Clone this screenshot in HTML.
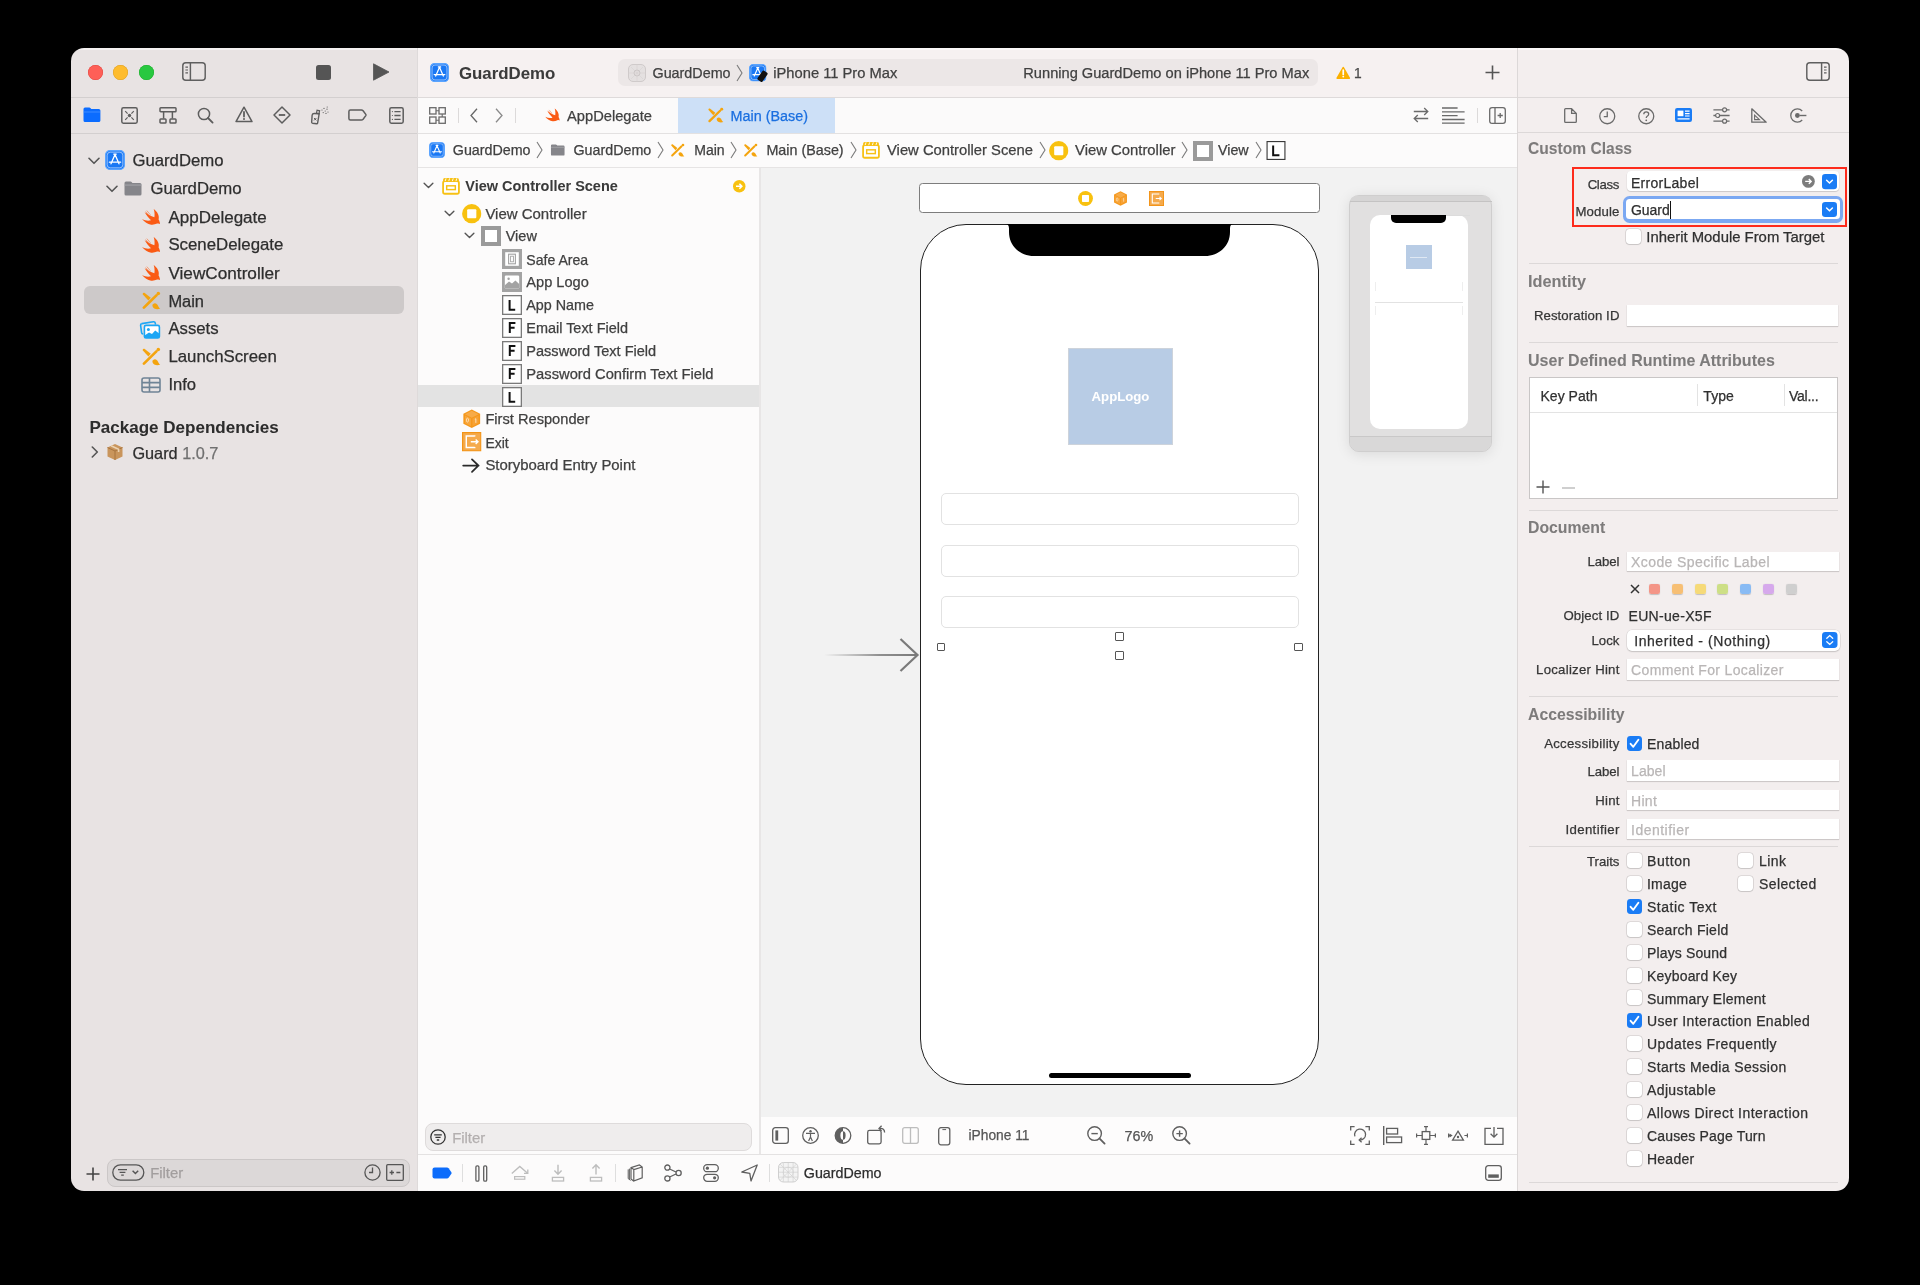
<!DOCTYPE html>
<html><head><meta charset="utf-8">
<style>
html,body{margin:0;padding:0;background:#000;width:1920px;height:1285px;overflow:hidden;}
body{font-family:"Liberation Sans",sans-serif;color:#2a2a2a;position:relative;}
#win{position:absolute;left:0;top:0;width:1920px;height:1285px;clip-path:inset(48px 71px 94px 71px round 13px);will-change:transform;}
.p{position:absolute;}
.t{position:absolute;white-space:nowrap;line-height:1;-webkit-text-stroke:0.25px currentColor;}
svg{position:absolute;overflow:visible;}
</style></head><body>

<svg width="0" height="0" style="position:absolute">
<defs>
<symbol id="appicon" viewBox="0 0 20 20"><rect x="0.6" y="0.6" width="18.8" height="18.8" rx="4.2" fill="#1a78f4" stroke="#5aa4ff" stroke-width="1.2"/><rect x="2.2" y="2.2" width="15.6" height="15.6" rx="3" fill="none" stroke="#d9e9ff" stroke-width="0.7" opacity="0.9"/><path d="M10 4.6 L6 13.8 M10 4.6 L14 13.8 M4.4 12.2 H15.6 M8.8 4.2 L11.2 4.2" stroke="#fff" stroke-width="1.3" fill="none" stroke-linecap="round"/></symbol>
<symbol id="folderg" viewBox="0 0 18 15"><path d="M0.5 2 Q0.5 0.5 2 0.5 H6.5 Q7.3 0.5 7.8 1.2 L8.4 2 H16 Q17.5 2 17.5 3.5 V13 Q17.5 14.5 16 14.5 H2 Q0.5 14.5 0.5 13 Z" fill="#85858a"/><rect x="0.5" y="3.6" width="17" height="0.9" fill="#a9a9ad"/></symbol>
<symbol id="swift" viewBox="-1 -2 20 20"><path d="M11.7 0 C15.2 2.5 17.6 6.5 16.6 10.6 C17.4 12 18 13.5 18 15 C17.2 14.4 16.2 14.2 15.2 14.6 C13.2 15.5 11.2 15.9 9.2 15.7 C5.6 15.3 2.4 13 0 10.1 C3.2 11.8 6.4 12.2 9 11.3 C6.8 9 4.2 6.2 2.6 3.1 C4.6 4.6 9 7.6 12.4 8.2 C12.8 5.5 12.6 2.5 11.7 0 Z" fill="#fa5a14"/><path d="M3.6 2.6 L7.2 6.6 M4.8 1.6 L8.4 5.8" stroke="#fa6a2a" stroke-width="0.7" opacity="0.8"/></symbol>
<symbol id="sb" viewBox="0 0 20 20"><path d="M2.9 16.6 L15.4 4.4" stroke="#f4a40e" stroke-width="2.7" stroke-linecap="round"/><circle cx="17.3" cy="2.6" r="1.75" fill="#f4a40e"/><path d="M1.6 3.2 Q1.8 1.4 3.4 1.8 L9.8 6.8 L7.4 9.6 Z" fill="#f4a40e"/><path d="M11.4 13.8 Q13 11.6 15 12.6 Q16.8 13.6 17.4 15.6 Q18 17 19.2 17.6 Q17.2 18.4 14.8 18 Q11.2 17.2 11.4 13.8 Z" fill="#f4a40e"/></symbol>
<symbol id="assets" viewBox="0 0 22 20"><path d="M2.8 3.6 L14.4 1.8 Q16 1.6 16.3 3.2 L16.5 4.6" stroke="#1ba6f5" stroke-width="1.6" fill="none"/><path d="M2.8 3.6 Q1.4 3.9 1.6 5.4 L2.6 12.6 Q2.8 14 4.2 13.9" stroke="#1ba6f5" stroke-width="1.6" fill="none"/><rect x="5.4" y="5.4" width="15" height="12.6" rx="1.6" fill="#fff" stroke="#1ba6f5" stroke-width="1.6"/><circle cx="9.4" cy="9.4" r="1.5" fill="#1ba6f5"/><path d="M5.6 15.6 L10 12.4 L13 14 L16.2 10.4 L20.2 13.6 V17 Q20.2 18 19.2 18 H6.6 Q5.6 18 5.6 17 Z" fill="#1ba6f5"/></symbol>
<symbol id="infoi" viewBox="0 0 20 16"><rect x="1" y="1" width="18" height="14" rx="2" fill="none" stroke="#6f8496" stroke-width="1.6"/><path d="M1 5.6 H19 M1 10.4 H19 M8.5 1 V15" stroke="#6f8496" stroke-width="1.6"/></symbol>
<symbol id="chevd" viewBox="0 0 12 8"><path d="M1 1.3 L6 6.3 L11 1.3" stroke="#555" stroke-width="1.6" fill="none" stroke-linecap="round" stroke-linejoin="round"/></symbol>
<symbol id="chevr" viewBox="0 0 8 12"><path d="M1.3 1 L6.3 6 L1.3 11" stroke="#555" stroke-width="1.6" fill="none" stroke-linecap="round" stroke-linejoin="round"/></symbol>
<symbol id="pkg" viewBox="0 0 18 18"><path d="M9 1 L16.5 4.5 V13.5 L9 17 L1.5 13.5 V4.5 Z" fill="#c9955c"/><path d="M1.5 4.5 L9 8 L16.5 4.5 M9 8 V17" stroke="#a8743f" stroke-width="1" fill="none"/><path d="M5 2.8 L12.6 6.3 V9" stroke="#ecd2b0" stroke-width="1.6" fill="none"/></symbol>
</defs></svg>
<svg width="0" height="0" style="position:absolute"><defs>
<symbol id="gt" viewBox="0 0 7 18"><path d="M1 1 L6 9 L1 17" stroke="#7a7a7a" stroke-width="1.1" fill="none"/></symbol>
<symbol id="scene" viewBox="0 0 20 20"><rect x="1.2" y="4.6" width="17.6" height="14" rx="2" fill="#fff" stroke="#f7c115" stroke-width="2"/><path d="M1.2 3 Q1.2 1.2 3 1.2 H17 Q18.8 1.2 18.8 3 V5 H1.2 Z" fill="#f7c115"/><path d="M4.5 1.5 L3.5 4.6 M8.5 1.5 L7.5 4.6 M12.5 1.5 L11.5 4.6 M16.5 1.5 L15.5 4.6" stroke="#fff" stroke-width="1"/><rect x="5.2" y="9.8" width="9.6" height="4.2" fill="none" stroke="#f7c115" stroke-width="1.6"/></symbol>
<symbol id="vc" viewBox="0 0 20 20"><circle cx="10" cy="10" r="9.9" fill="#f8c10f"/><rect x="5.3" y="5.3" width="9.4" height="9.4" rx="1" fill="#fff"/></symbol>
<symbol id="viewi" viewBox="0 0 20 20"><rect x="0" y="0" width="20" height="20" fill="#9a9a9a"/><rect x="4" y="4" width="12" height="12" fill="#fff"/></symbol>
<symbol id="lbl" viewBox="0 0 20 20"><rect x="0.6" y="0.6" width="18.8" height="18.8" fill="#fff" stroke="#3a3a3a" stroke-width="1.2"/><path d="M7 4.8 V15 H13.6" stroke="#111" stroke-width="2.1" fill="none"/></symbol>
<symbol id="fld" viewBox="0 0 20 20"><rect x="0.6" y="0.6" width="18.8" height="18.8" fill="#fff" stroke="#3a3a3a" stroke-width="1.2"/><path d="M7.4 15.2 V4.8 H13.6 M7.4 9.8 H12.8" stroke="#111" stroke-width="2.1" fill="none"/></symbol>
</defs></svg>
<svg width="0" height="0" style="position:absolute"><defs>
<symbol id="safe" viewBox="0 0 20 20"><rect x="0" y="0" width="20" height="20" fill="#a3a3a3"/><rect x="3.2" y="3.2" width="13.6" height="13.6" fill="#fff"/><rect x="6.6" y="5.2" width="6.8" height="9.6" fill="none" stroke="#a3a3a3" stroke-width="1.1"/><rect x="8.6" y="7.2" width="2.8" height="5.6" fill="none" stroke="#a3a3a3" stroke-width="0.9"/></symbol>
<symbol id="imgv" viewBox="0 0 20 20"><rect x="0" y="0" width="20" height="20" fill="#a3a3a3"/><rect x="2.8" y="3.6" width="14.4" height="12.8" rx="1.2" fill="#fff"/><path d="M2.8 13.2 L7 9.6 L10 11.6 L13.4 8.6 L17.2 12 V15.2 Q17.2 16.4 16 16.4 H4 Q2.8 16.4 2.8 15.2 Z" fill="#a3a3a3"/><circle cx="6.6" cy="6.8" r="1.2" fill="#a3a3a3"/></symbol>
<symbol id="lblo" viewBox="0 0 20 20"><rect x="0.65" y="0.65" width="18.7" height="18.7" fill="#fff" stroke="#7a7a7a" stroke-width="1.3"/><path d="M7.6 5 V14.8 H13.2" stroke="#111" stroke-width="2" fill="none"/></symbol>
<symbol id="fldo" viewBox="0 0 20 20"><rect x="0.65" y="0.65" width="18.7" height="18.7" fill="#fff" stroke="#7a7a7a" stroke-width="1.3"/><path d="M7.8 15 V5 H13.4 M7.8 9.8 H12.6" stroke="#111" stroke-width="2" fill="none"/></symbol>
<symbol id="cube" viewBox="0 0 20 20"><path d="M10 0.4 L18.6 4.8 V15.2 L10 19.6 L1.4 15.2 V4.8 Z" fill="#f5981c"/><path d="M10 1.8 L17 5.4 L10 9 L3 5.4 Z" fill="#f7ab48"/><path d="M3 6.6 L9.3 9.8 V17.8 L3 14.4 Z" fill="#f7a63c"/><path d="M10.7 9.8 L17 6.6 V14.4 L10.7 17.8 Z" fill="#f7a235"/><ellipse cx="5.6" cy="11.4" rx="1.1" ry="2" fill="none" stroke="#fde2bd" stroke-width="0.9"/><path d="M13.2 10.6 L14.2 10 V14.2" stroke="#fde2bd" stroke-width="1" fill="none"/></symbol>
<symbol id="exiti" viewBox="0 0 20 20"><rect x="0" y="0" width="20" height="20" fill="#f39416"/><rect x="1.2" y="1.2" width="17.6" height="17.6" fill="#f5aa4c"/><path d="M13 4.6 V4 H4.4 V16 H13 V15.4" stroke="#fff" stroke-width="1.5" fill="none"/><path d="M9 10 H16.2 M14 7.8 L16.4 10 L14 12.2" stroke="#fff" stroke-width="1.4" fill="none"/></symbol>
</defs></svg>

<div id="win">
<div class="p" style="left:71px;top:48px;width:346px;height:1143px;background:#e8e3e3"></div>
<div class="p" style="left:71px;top:48px;width:346px;height:2px;background:#f4f1f1"></div>
<div class="p" style="left:71px;top:97px;width:346px;height:1px;background:#d3cfcf"></div>
<div class="p" style="left:71px;top:133px;width:346px;height:1px;background:#d3cfcf"></div>
<div class="p" style="left:417px;top:48px;width:1px;height:1143px;background:#dedada"></div>
<div class="p" style="left:418px;top:48px;width:1099px;height:49px;background:#f6f1f1"></div>
<div class="p" style="left:418px;top:48px;width:1099px;height:2px;background:#fbf9f9"></div>
<div class="p" style="left:418px;top:97px;width:1099px;height:1px;background:#dedada"></div>
<div class="p" style="left:418px;top:98px;width:1099px;height:35px;background:#fbfafa"></div>
<div class="p" style="left:418px;top:133px;width:1099px;height:1px;background:#e3e1e1"></div>
<div class="p" style="left:418px;top:134px;width:1099px;height:33px;background:#fcfbfb"></div>
<div class="p" style="left:418px;top:167px;width:1099px;height:1px;background:#e6e4e4"></div>
<div class="p" style="left:418px;top:168px;width:341px;height:987px;background:#fcfbfb"></div>
<div class="p" style="left:759px;top:168px;width:2px;height:987px;background:#e8e6e6"></div>
<div class="p" style="left:761px;top:168px;width:756px;height:949px;background:#f2f2f2"></div>
<div class="p" style="left:761px;top:1117px;width:756px;height:37px;background:#fdfcfc"></div>
<div class="p" style="left:418px;top:1154px;width:1099px;height:1px;background:#e4e2e2"></div>
<div class="p" style="left:418px;top:1155px;width:1099px;height:36px;background:#fcfbfb"></div>
<div class="p" style="left:1517px;top:48px;width:1px;height:1143px;background:#dcd8d8"></div>
<div class="p" style="left:1518px;top:48px;width:331px;height:1143px;background:#f3eeee"></div>
<div class="p" style="left:1518px;top:48px;width:331px;height:2px;background:#fbf8f8"></div>
<div class="p" style="left:1518px;top:97px;width:331px;height:1px;background:#dcd8d8"></div>
<div class="p" style="left:1518px;top:132px;width:331px;height:1px;background:#dcd8d8"></div>
<div class="p" style="left:88px;top:65px;width:15px;height:15px;border-radius:50%;background:#fe5f57;box-shadow:inset 0 0 0 0.5px #e14640"></div>
<div class="p" style="left:113px;top:65px;width:15px;height:15px;border-radius:50%;background:#febc2e;box-shadow:inset 0 0 0 0.5px #dfa023"></div>
<div class="p" style="left:139px;top:65px;width:15px;height:15px;border-radius:50%;background:#28c840;box-shadow:inset 0 0 0 0.5px #1dad2b"></div>
<svg style="left:182px;top:62px;" width="25" height="20" viewBox="0 0 25 20"><rect x="0.8" y="0.8" width="22.4" height="17.4" rx="3" fill="none" stroke="#5f5f5f" stroke-width="1.45"/><path d="M8.4 1 V18" stroke="#5f5f5f" stroke-width="1.45"/><path d="M3.4 5.2 H6 M3.4 8 H6 M3.4 10.8 H6" stroke="#5f5f5f" stroke-width="1.2"/></svg>
<div class="p" style="left:316px;top:65px;width:15px;height:15px;background:#555;border-radius:2.5px"></div>
<svg style="left:372px;top:63px;" width="18" height="18" viewBox="0 0 18 18"><path d="M1.5 0.8 L17 9 L1.5 17.2 Z" fill="#555" stroke="#555" stroke-width="0.8" stroke-linejoin="round"/></svg>
<svg style="left:83px;top:107px;" width="18" height="16" viewBox="0 0 18 16"><path d="M0.5 2 Q0.5 0.5 2 0.5 H6.3 Q7 0.5 7.6 1.2 L8.3 2 H15.8 Q17.4 2 17.4 3.6 V13.4 Q17.4 15 15.8 15 H2 Q0.5 15 0.5 13.4 Z" fill="#0b6cff"/><path d="M0.8 5 H17" stroke="#4d95ff" stroke-width="0.8"/></svg>
<svg style="left:121px;top:107px;" width="17" height="17" viewBox="0 0 17 17"><rect x="0.8" y="0.8" width="15.4" height="15.4" rx="1.6" fill="none" stroke="#5d5d5d" stroke-width="1.5"/><circle cx="8.5" cy="8.5" r="1.7" fill="#5d5d5d"/><path d="M4.2 4.2 L6.6 6.6 M12.8 4.2 L10.4 6.6 M4.2 12.8 L6.6 10.4 M12.8 12.8 L10.4 10.4" stroke="#5d5d5d" stroke-width="1.2"/></svg>
<svg style="left:159px;top:107px;" width="18" height="17" viewBox="0 0 18 17"><rect x="1" y="0.8" width="16" height="4" rx="0.8" fill="none" stroke="#5d5d5d" stroke-width="1.5"/><path d="M4.6 4.8 V11.6 M13.4 4.8 V11.6" stroke="#5d5d5d" stroke-width="1.5"/><rect x="1" y="12" width="6" height="4" rx="0.8" fill="none" stroke="#5d5d5d" stroke-width="1.5"/><rect x="11" y="12" width="6" height="4" rx="0.8" fill="none" stroke="#5d5d5d" stroke-width="1.5"/></svg>
<svg style="left:197px;top:107px;" width="17" height="17" viewBox="0 0 17 17"><circle cx="7" cy="7" r="5.6" fill="none" stroke="#5d5d5d" stroke-width="1.5"/><path d="M11 11 L15.6 15.6" stroke="#5d5d5d" stroke-width="1.8" stroke-linecap="round"/></svg>
<svg style="left:235px;top:106px;" width="18" height="17" viewBox="0 0 18 17"><path d="M9 1.2 L17 15.6 H1 Z" fill="none" stroke="#5d5d5d" stroke-width="1.5" stroke-linejoin="round"/><path d="M9 6 V10.6" stroke="#5d5d5d" stroke-width="1.8" stroke-linecap="round"/><circle cx="9" cy="13" r="1" fill="#5d5d5d"/></svg>
<svg style="left:273px;top:106px;" width="18" height="18" viewBox="0 0 18 18"><path d="M9 1 L17 9 L9 17 L1 9 Z" fill="none" stroke="#5d5d5d" stroke-width="1.5" stroke-linejoin="round"/><path d="M5.8 9 H12.2" stroke="#5d5d5d" stroke-width="1.8"/></svg>
<svg style="left:310px;top:106px;" width="20" height="18" viewBox="0 0 20 18"><path d="M3.4 7.8 L8.2 7 L8.6 16.4 Q8.6 17.2 7.8 17.3 L3.6 17.6 Q2.8 17.6 2.6 16.8 L1.6 9.8 Q1.6 8.1 3.4 7.8 Z" fill="none" stroke="#5d5d5d" stroke-width="1.4" transform="rotate(12 5 12)"/><rect x="5.4" y="4" width="2.6" height="3" fill="none" stroke="#5d5d5d" stroke-width="1.2" transform="rotate(12 5 12)"/><path d="M4 12 L6.4 14.4 M6.4 12 L4 14.4" stroke="#5d5d5d" stroke-width="1"/><g fill="#5d5d5d"><circle cx="12" cy="4" r="0.6"/><circle cx="14" cy="2.4" r="0.6"/><circle cx="15.2" cy="5" r="0.6"/><circle cx="17" cy="3.2" r="0.6"/><circle cx="13.2" cy="6.6" r="0.6"/><circle cx="16" cy="7.4" r="0.6"/><circle cx="18" cy="6" r="0.6"/><circle cx="17.2" cy="1" r="0.6"/></g></svg>
<svg style="left:348px;top:108.5px;" width="19" height="13" viewBox="0 0 19 13"><path d="M2.4 0.9 H13.4 Q14.4 0.9 15.1 1.7 L17.8 5.4 Q18.2 6 17.8 6.6 L15.1 10.3 Q14.4 11.1 13.4 11.1 H2.4 Q0.9 11.1 0.9 9.6 V2.4 Q0.9 0.9 2.4 0.9 Z" fill="none" stroke="#5d5d5d" stroke-width="1.5"/></svg>
<svg style="left:389px;top:106.8px;" width="15" height="17" viewBox="0 0 15 17"><rect x="0.8" y="0.8" width="13.4" height="15.4" rx="1.6" fill="none" stroke="#5d5d5d" stroke-width="1.5"/><path d="M5.4 4.6 H11.6 M5.4 8.5 H11.6 M5.4 12.4 H11.6" stroke="#5d5d5d" stroke-width="1.4"/><circle cx="3.4" cy="4.6" r="0.6" fill="#5d5d5d"/><circle cx="3.4" cy="8.5" r="0.6" fill="#5d5d5d"/><circle cx="3.4" cy="12.4" r="0.6" fill="#5d5d5d"/></svg>
<svg style="left:88px;top:157px;" width="12" height="8"><use href="#chevd"/></svg>
<svg style="left:105px;top:150px;" width="20" height="20"><use href="#appicon"/></svg>
<div class="t" style="left:132.40px;top:152.88px;font-size:16.74px;color:#2e2e2e;">GuardDemo</div>
<svg style="left:106px;top:185px;" width="12" height="8"><use href="#chevd"/></svg>
<svg style="left:124px;top:181px;" width="18" height="15"><use href="#folderg"/></svg>
<div class="t" style="left:150.40px;top:180.88px;font-size:16.74px;color:#2e2e2e;">GuardDemo</div>
<div class="p" style="left:84px;top:286px;width:320px;height:28px;background:#cdc9c9;border-radius:6px"></div>
<svg style="left:141px;top:206.5px;" width="20" height="20"><use href="#swift"/></svg>
<div class="t" style="left:168.40px;top:208.76px;font-size:17.02px;color:#2e2e2e;">AppDelegate</div>
<svg style="left:141px;top:234.5px;" width="20" height="20"><use href="#swift"/></svg>
<div class="t" style="left:168.40px;top:236.85px;font-size:16.82px;color:#2e2e2e;">SceneDelegate</div>
<svg style="left:141px;top:262.5px;" width="20" height="20"><use href="#swift"/></svg>
<div class="t" style="left:168.40px;top:264.67px;font-size:17.21px;color:#2e2e2e;">ViewController</div>
<svg style="left:141px;top:290.5px;" width="20" height="20"><use href="#sb"/></svg>
<div class="t" style="left:168.40px;top:293.03px;font-size:16.42px;color:#2e2e2e;">Main</div>
<svg style="left:139px;top:319.5px;" width="22" height="20"><use href="#assets"/></svg>
<div class="t" style="left:168.40px;top:320.89px;font-size:16.73px;color:#2e2e2e;">Assets</div>
<svg style="left:141px;top:346.5px;" width="20" height="20"><use href="#sb"/></svg>
<div class="t" style="left:168.40px;top:348.85px;font-size:16.81px;color:#2e2e2e;">LaunchScreen</div>
<svg style="left:141px;top:376.5px;" width="20" height="16"><use href="#infoi"/></svg>
<div class="t" style="left:168.40px;top:376.94px;font-size:16.61px;color:#2e2e2e;">Info</div>
<div class="t" style="left:89.50px;top:419.26px;font-size:17.02px;color:#2c2c2c;font-weight:bold;-webkit-text-stroke:0.05px currentColor;">Package Dependencies</div>
<svg style="left:91px;top:446px;" width="8" height="12"><use href="#chevr"/></svg>
<svg style="left:106px;top:443px;" width="18" height="18"><use href="#pkg"/></svg>
<div class="t" style="left:132.40px;top:445.09px;font-size:16.28px;color:#2e2e2e;">Guard <span style="color:#707070">1.0.7</span></div>
<svg style="left:85px;top:1165.5px;" width="16" height="16" viewBox="0 0 16 16"><path d="M8 1.5 V14.5 M1.5 8 H14.5" stroke="#444" stroke-width="1.6"/></svg>
<div class="p" style="left:107px;top:1159px;width:303px;height:28px;background:#dcd8d8;border:1px solid #cbc7c7;border-radius:8px;box-sizing:border-box"></div>
<svg style="left:112px;top:1164px;" width="34" height="17" viewBox="0 0 34 17"><rect x="0.8" y="0.8" width="31" height="15.4" rx="7.7" fill="none" stroke="#555" stroke-width="1.3"/><path d="M6 5.6 H15 M7.6 8.4 H13.4 M9.2 11.2 H11.8" stroke="#555" stroke-width="1.2"/><path d="M20.6 6.8 L23.4 9.6 L26.2 6.8" stroke="#555" stroke-width="1.4" fill="none"/></svg>
<div class="t" style="left:150.20px;top:1165.74px;font-size:14.85px;color:#a29e9e;">Filter</div>
<svg style="left:364px;top:1164px;" width="17" height="17" viewBox="0 0 17 17"><circle cx="8.5" cy="8.5" r="7.6" fill="none" stroke="#555" stroke-width="1.3"/><path d="M8.5 3.6 V8.5 H5" stroke="#555" stroke-width="1.3" fill="none"/></svg>
<svg style="left:386px;top:1164px;" width="18" height="17" viewBox="0 0 18 17"><rect x="0.7" y="0.7" width="16.6" height="15.6" rx="1" fill="none" stroke="#555" stroke-width="1.3"/><path d="M3.6 8.5 H8 M5.8 6.3 V10.7 M10.4 8.5 H14.4" stroke="#555" stroke-width="1.3"/></svg>
<svg style="left:430px;top:63px;" width="19" height="19"><use href="#appicon"/></svg>
<div class="t" style="left:459.00px;top:65.94px;font-size:16.84px;color:#3b3b3b;font-weight:bold;-webkit-text-stroke:0.05px currentColor;">GuardDemo</div>
<div class="p" style="left:618px;top:59px;width:700px;height:27px;background:#ece7e7;border-radius:7px"></div>
<svg style="left:628px;top:63.5px;" width="18" height="18" viewBox="0 0 18 18"><rect x="0.5" y="0.5" width="17" height="17" rx="4.5" fill="#e4e0e0" stroke="#cfcaca" stroke-width="1"/><circle cx="9" cy="9" r="3" fill="none" stroke="#cbc6c6" stroke-width="1"/><path d="M9 0.5 V17.5 M0.5 9 H17.5 M3 3 L15 15 M15 3 L3 15" stroke="#d6d1d1" stroke-width="0.6"/></svg>
<div class="t" style="left:652.50px;top:65.68px;font-size:14.34px;color:#414141;">GuardDemo</div>
<svg style="left:736px;top:63.5px;" width="7" height="18"><use href="#gt"/></svg>
<svg style="left:749px;top:63.5px;" width="17.5" height="17.5"><use href="#appicon"/></svg>
<svg style="left:758px;top:70px;" width="10" height="13" viewBox="0 0 10 13"><rect x="1.5" y="0.8" width="6" height="11" rx="1.2" fill="#111" transform="rotate(35 4.5 6.3)"/></svg>
<div class="t" style="left:773.30px;top:65.51px;font-size:14.71px;color:#414141;">iPhone 11 Pro Max</div>
<div class="t" style="left:1023.30px;top:65.54px;font-size:14.63px;color:#414141;">Running GuardDemo on iPhone 11 Pro Max</div>
<svg style="left:1335.5px;top:65.5px;" width="14.5" height="13.5" viewBox="0 0 14.5 13.5"><path d="M7.25 0.8 Q7.8 0.8 8.1 1.4 L14 11.8 Q14.4 12.8 13.3 12.9 H1.2 Q0.1 12.8 0.5 11.8 L6.4 1.4 Q6.7 0.8 7.25 0.8 Z" fill="#fbb000"/><path d="M7.25 4 V8.4" stroke="#fff" stroke-width="1.7" stroke-linecap="round"/><circle cx="7.25" cy="10.6" r="0.95" fill="#fff"/></svg>
<div class="t" style="left:1354.00px;top:66.62px;font-size:13.8px;color:#4a4a4a;">1</div>
<svg style="left:1484.5px;top:65px;" width="15" height="15" viewBox="0 0 15 15"><path d="M7.5 0.5 V14.5 M0.5 7.5 H14.5" stroke="#555" stroke-width="1.6"/></svg>
<svg style="left:429px;top:107px;" width="17" height="17" viewBox="0 0 17 17"><rect x="0.7" y="0.7" width="6.3" height="6.3" fill="none" stroke="#6a6a6a" stroke-width="1.3"/><rect x="10" y="0.7" width="6.3" height="6.3" fill="none" stroke="#6a6a6a" stroke-width="1.3"/><rect x="0.7" y="10" width="6.3" height="6.3" fill="none" stroke="#6a6a6a" stroke-width="1.3"/><rect x="10" y="10" width="6.3" height="6.3" fill="none" stroke="#6a6a6a" stroke-width="1.3"/><path d="M7 3.8 H10 M7 13.2 H10 M13.2 7 V10" stroke="#6a6a6a" stroke-width="1.1"/></svg>
<div class="p" style="left:458px;top:108px;width:1px;height:15px;background:#dcdada"></div>
<svg style="left:470px;top:108px;" width="8" height="15" viewBox="0 0 8 15"><path d="M7 0.8 L1 7.5 L7 14.2" stroke="#666" stroke-width="1.3" fill="none"/></svg>
<svg style="left:495px;top:108px;" width="8" height="15" viewBox="0 0 8 15"><path d="M1 0.8 L7 7.5 L1 14.2" stroke="#8a8a8a" stroke-width="1.3" fill="none"/></svg>
<div class="p" style="left:515px;top:108px;width:1px;height:15px;background:#dcdada"></div>
<svg style="left:544px;top:107px;" width="17" height="16"><use href="#swift"/></svg>
<div class="t" style="left:567.00px;top:108.61px;font-size:14.7px;color:#414141;">AppDelegate</div>
<div class="p" style="left:678px;top:98px;width:157px;height:35px;background:#cde0f7"></div>
<svg style="left:707px;top:107px;" width="17" height="17"><use href="#sb"/></svg>
<div class="t" style="left:730.50px;top:108.76px;font-size:14.38px;color:#1a6fe0;">Main (Base)</div>
<svg style="left:1413px;top:107px;" width="16" height="16" viewBox="0 0 16 16"><path d="M0.8 4.5 H14.6 M11.2 1 L14.8 4.5 L11.2 8 M15.2 11.5 H1.4 M4.8 8 L1.2 11.5 L4.8 15" stroke="#6a6a6a" stroke-width="1.3" fill="none"/></svg>
<svg style="left:1442px;top:107px;" width="23" height="17" viewBox="0 0 23 17"><path d="M0 1 H15.6 M0 4.9 H22.6 M0 8.7 H15.6 M0 12.5 H22.6 M0 16.2 H22.6" stroke="#6a6a6a" stroke-width="1.3"/></svg>
<div class="p" style="left:1477px;top:108px;width:1px;height:15px;background:#dcdada"></div>
<svg style="left:1489px;top:107px;" width="17" height="17" viewBox="0 0 17 17"><rect x="0.7" y="0.7" width="15.6" height="15.6" rx="2.4" fill="none" stroke="#6a6a6a" stroke-width="1.3"/><path d="M6 0.7 V16.3 M8.6 8.5 H13.8 M11.2 5.9 V11.1" stroke="#6a6a6a" stroke-width="1.3"/></svg>
<svg style="left:429px;top:142px;" width="16" height="16"><use href="#appicon"/></svg>
<div class="t" style="left:452.80px;top:143.30px;font-size:14.28px;color:#414141;">GuardDemo</div>
<svg style="left:536px;top:141px;" width="7" height="18"><use href="#gt"/></svg>
<svg style="left:549.5px;top:144px;" width="15.5" height="12"><use href="#folderg"/></svg>
<div class="t" style="left:573.50px;top:143.30px;font-size:14.28px;color:#414141;">GuardDemo</div>
<svg style="left:657px;top:141px;" width="7" height="18"><use href="#gt"/></svg>
<svg style="left:670px;top:143px;" width="15" height="15"><use href="#sb"/></svg>
<div class="t" style="left:694.20px;top:143.40px;font-size:14.07px;color:#414141;">Main</div>
<svg style="left:729.5px;top:141px;" width="7" height="18"><use href="#gt"/></svg>
<svg style="left:743px;top:143px;" width="15" height="15"><use href="#sb"/></svg>
<div class="t" style="left:766.40px;top:143.28px;font-size:14.34px;color:#414141;">Main (Base)</div>
<svg style="left:850px;top:141px;" width="7" height="18"><use href="#gt"/></svg>
<svg style="left:862px;top:141px;" width="18" height="18"><use href="#scene"/></svg>
<div class="t" style="left:887.00px;top:143.07px;font-size:14.79px;color:#414141;">View Controller Scene</div>
<svg style="left:1038.5px;top:141px;" width="7" height="18"><use href="#gt"/></svg>
<svg style="left:1049px;top:140.5px;" width="19.5" height="19.5"><use href="#vc"/></svg>
<div class="t" style="left:1075.00px;top:143.04px;font-size:14.85px;color:#414141;">View Controller</div>
<svg style="left:1181px;top:141px;" width="7" height="18"><use href="#gt"/></svg>
<svg style="left:1192.5px;top:140.5px;" width="20" height="20"><use href="#viewi"/></svg>
<div class="t" style="left:1218.00px;top:143.30px;font-size:14.28px;color:#414141;">View</div>
<svg style="left:1255px;top:141px;" width="7" height="18"><use href="#gt"/></svg>
<svg style="left:1266px;top:141px;" width="20" height="19"><use href="#lbl"/></svg>
<svg style="left:1806px;top:62px;" width="25" height="20" viewBox="0 0 25 20"><rect x="0.8" y="0.8" width="22.4" height="17.4" rx="3" fill="none" stroke="#5f5f5f" stroke-width="1.45"/><path d="M15.6 1 V18" stroke="#5f5f5f" stroke-width="1.45"/><path d="M18 5.2 H20.6 M18 8 H20.6 M18 10.8 H20.6" stroke="#5f5f5f" stroke-width="1.2"/></svg>
<div class="p" style="left:418px;top:385px;width:341px;height:22px;background:#e3e3e3"></div>
<svg style="left:423px;top:182px;" width="11" height="7"><use href="#chevd"/></svg>
<svg style="left:442px;top:177px;" width="18" height="18"><use href="#scene"/></svg>
<div class="t" style="left:465.30px;top:179.12px;font-size:14.47px;color:#3a3a3a;font-weight:bold;-webkit-text-stroke:0.05px currentColor;">View Controller Scene</div>
<svg style="left:733px;top:179.5px;" width="12.5" height="12.5" viewBox="0 0 12.5 12.5"><circle cx="6.25" cy="6.25" r="6.25" fill="#f8c10f"/><path d="M3 6.25 H8.6 M6.4 3.8 L8.8 6.25 L6.4 8.7" stroke="#fff" stroke-width="1.6" fill="none"/></svg>
<svg style="left:443.5px;top:209.5px;" width="11" height="7"><use href="#chevd"/></svg>
<svg style="left:461.5px;top:203.5px;" width="19.5" height="19.5"><use href="#vc"/></svg>
<div class="t" style="left:485.40px;top:206.69px;font-size:14.97px;color:#404040;">View Controller</div>
<svg style="left:464px;top:232px;" width="11" height="7"><use href="#chevd"/></svg>
<svg style="left:481.2px;top:226px;" width="20" height="20"><use href="#viewi"/></svg>
<div class="t" style="left:505.70px;top:229.39px;font-size:14.52px;color:#404040;">View</div>
<svg style="left:502px;top:249.10000000000002px;" width="20" height="20"><use href="#safe"/></svg>
<div class="t" style="left:526.30px;top:252.68px;font-size:14.1px;color:#404040;">Safe Area</div>
<svg style="left:502px;top:272.05px;" width="20" height="20"><use href="#imgv"/></svg>
<div class="t" style="left:526.30px;top:275.41px;font-size:14.6px;color:#404040;">App Logo</div>
<svg style="left:502px;top:295.0px;" width="20" height="20"><use href="#lblo"/></svg>
<div class="t" style="left:526.30px;top:298.48px;font-size:14.33px;color:#404040;">App Name</div>
<svg style="left:502px;top:317.95000000000005px;" width="20" height="20"><use href="#fldo"/></svg>
<div class="t" style="left:526.30px;top:321.38px;font-size:14.45px;color:#404040;">Email Text Field</div>
<svg style="left:502px;top:340.90000000000003px;" width="20" height="20"><use href="#fldo"/></svg>
<div class="t" style="left:526.30px;top:344.28px;font-size:14.55px;color:#404040;">Password Text Field</div>
<svg style="left:502px;top:363.85px;" width="20" height="20"><use href="#fldo"/></svg>
<div class="t" style="left:526.30px;top:367.15px;font-size:14.73px;color:#404040;">Password Confirm Text Field</div>
<svg style="left:502px;top:386.8px;" width="20" height="20"><use href="#lblo"/></svg>
<svg style="left:461.5px;top:409px;" width="19.5" height="19.5"><use href="#cube"/></svg>
<div class="t" style="left:485.40px;top:412.33px;font-size:14.65px;color:#404040;">First Responder</div>
<svg style="left:461.5px;top:432px;" width="19.5" height="19.5"><use href="#exiti"/></svg>
<div class="t" style="left:485.40px;top:435.64px;font-size:13.98px;color:#404040;">Exit</div>
<svg style="left:462px;top:456px;" width="19" height="19" viewBox="0 0 19 19"><path d="M1.2 9.6 H16.6 M10 3.4 L16.4 9.6 L10 15.8" stroke="#2a2a2a" stroke-width="1.8" fill="none" stroke-linecap="round"/></svg>
<div class="t" style="left:485.40px;top:458.22px;font-size:14.91px;color:#404040;">Storyboard Entry Point</div>
<div class="p" style="left:425px;top:1123px;width:327px;height:28px;background:#efeded;border:1px solid #dedbdb;border-radius:8px;box-sizing:border-box"></div>
<svg style="left:430px;top:1129px;" width="16" height="16" viewBox="0 0 16 16"><circle cx="8" cy="8" r="7.2" fill="none" stroke="#333" stroke-width="1.3"/><path d="M4.2 5.8 H11.8 M5.4 8.4 H10.6 M6.8 11 H9.2" stroke="#333" stroke-width="1.3"/></svg>
<div class="t" style="left:452.20px;top:1130.74px;font-size:14.85px;color:#b3afaf;">Filter</div>
<div class="p" style="left:919px;top:182.5px;width:401px;height:30.5px;background:#fff;border:1.3px solid #7d7d7d;border-radius:3.5px;box-sizing:border-box"></div>
<svg style="left:1077.5px;top:190.5px;" width="15" height="15"><use href="#vc"/></svg>
<svg style="left:1113px;top:190.5px;" width="15" height="15"><use href="#cube"/></svg>
<svg style="left:1148.5px;top:190.5px;" width="15" height="15"><use href="#exiti"/></svg>
<div class="p" style="left:920px;top:224px;width:399px;height:861px;background:#fff;border:1.6px solid #222;border-radius:46px;box-sizing:border-box"></div>
<svg style="left:1005px;top:224px;" width="229" height="32" viewBox="0 0 229 32"><path d="M0 0 H229 C226.2 0 225 1.4 225 4.6 V8 C225 22 214 32 200 32 H29 C15 32 4 22 4 8 V4.6 C4 1.4 2.8 0 0 0 Z" fill="#000"/></svg>
<div class="p" style="left:1049px;top:1072.5px;width:141.5px;height:5.0px;background:#000;border-radius:3px"></div>
<div class="p" style="left:1068px;top:348px;width:105px;height:96.5px;background:#b8cce5;border:1px solid #cdd3db;box-sizing:border-box"></div>
<div class="t" style="left:820.50px;width:600px;text-align:center;top:389.99px;font-size:13.2px;color:#fff;font-weight:bold;-webkit-text-stroke:0.05px currentColor;">AppLogo</div>
<div class="p" style="left:940.5px;top:492.5px;width:358.5px;height:32.299999999999955px;background:#fff;border:1px solid #e2e2e2;border-radius:5px;box-sizing:border-box"></div>
<div class="p" style="left:940.5px;top:544.5px;width:358.5px;height:32.299999999999955px;background:#fff;border:1px solid #e2e2e2;border-radius:5px;box-sizing:border-box"></div>
<div class="p" style="left:940.5px;top:596px;width:358.5px;height:32.299999999999955px;background:#fff;border:1px solid #e2e2e2;border-radius:5px;box-sizing:border-box"></div>
<div class="p" style="left:936.7px;top:642.7px;width:8.599999999999909px;height:8.599999999999909px;background:#fff;border:1.5px solid #555;box-sizing:border-box;border-radius:1px"></div>
<div class="p" style="left:1115.0px;top:632.3000000000001px;width:8.599999999999909px;height:8.599999999999909px;background:#fff;border:1.5px solid #555;box-sizing:border-box;border-radius:1px"></div>
<div class="p" style="left:1115.0px;top:651.3000000000001px;width:8.599999999999909px;height:8.599999999999909px;background:#fff;border:1.5px solid #555;box-sizing:border-box;border-radius:1px"></div>
<div class="p" style="left:1294.2px;top:642.7px;width:8.599999999999909px;height:8.599999999999909px;background:#fff;border:1.5px solid #555;box-sizing:border-box;border-radius:1px"></div>
<svg style="left:824px;top:638px;" width="96" height="34" viewBox="0 0 96 34"><defs><linearGradient id="ag" gradientUnits="userSpaceOnUse" x1="0" y1="0" x2="92" y2="0"><stop offset="0" stop-color="#8a8a8a" stop-opacity="0"/><stop offset="0.6" stop-color="#858585" stop-opacity="0.9"/><stop offset="1" stop-color="#7a7a7a"/></linearGradient></defs><path d="M0 17 H92" stroke="url(#ag)" stroke-width="2.2"/><path d="M76.5 1 L93.5 17 L76.5 33" stroke="#7a7a7a" stroke-width="2.2" fill="none"/></svg>
<div class="p" style="left:1349px;top:195px;width:143px;height:257px;background:#e1e0e0;border:1px solid #cfcece;border-radius:10px;box-sizing:border-box;box-shadow:0 2px 14px rgba(0,0,0,0.10)"></div>
<div class="p" style="left:1350px;top:196px;width:141px;height:5.5px;background:#d6d5d5;border-radius:9px 9px 0 0"></div>
<div class="p" style="left:1349.5px;top:201px;width:142.0px;height:1px;background:#c4c3c3"></div>
<div class="p" style="left:1349.5px;top:436px;width:142.0px;height:1px;background:#c9c8c8"></div>
<div class="p" style="left:1350px;top:437px;width:141px;height:14px;background:#d9d8d8;border-radius:0 0 9px 9px"></div>
<div class="p" style="left:1369.5px;top:215px;width:98.5px;height:213.5px;background:#fff;border-radius:10px"></div>
<div class="p" style="left:1390.5px;top:215px;width:55.5px;height:8px;background:#000;border-radius:0 0 5px 5px"></div>
<div class="p" style="left:1405.5px;top:245px;width:26.0px;height:24px;background:#b8cce5"></div>
<div class="p" style="left:1410px;top:256.5px;width:17px;height:1.0px;background:#dfe8f3"></div>
<div class="p" style="left:1375px;top:281.5px;width:1px;height:9.0px;background:#eeeeee"></div>
<div class="p" style="left:1462px;top:281.5px;width:1px;height:9.0px;background:#eeeeee"></div>
<div class="p" style="left:1375px;top:301.5px;width:88px;height:1.0px;background:#e2e2e2"></div>
<div class="p" style="left:1375px;top:305.5px;width:1px;height:9.0px;background:#eeeeee"></div>
<div class="p" style="left:1462px;top:305.5px;width:1px;height:9.0px;background:#eeeeee"></div>
<div class="p" style="left:1446px;top:214.5px;width:24px;height:1.0px;background:#dcdcdc"></div>
<svg style="left:1564px;top:108px;" width="13" height="15" viewBox="0 0 13 15"><path d="M0.7 1.6 Q0.7 0.7 1.6 0.7 H7.6 L12.3 5.4 V13.4 Q12.3 14.3 11.4 14.3 H1.6 Q0.7 14.3 0.7 13.4 Z M7.6 0.7 V5.4 H12.3" stroke="#6a6a6a" stroke-width="1.3" fill="none" stroke-linejoin="round"/></svg>
<svg style="left:1599px;top:107.5px;" width="16.5" height="16.5" viewBox="0 0 16.5 16.5"><circle cx="8.25" cy="8.25" r="7.5" fill="none" stroke="#6a6a6a" stroke-width="1.3"/><path d="M8.25 3.6 V8.6 H4.8" stroke="#6a6a6a" stroke-width="1.3" fill="none"/></svg>
<svg style="left:1637.5px;top:107.5px;" width="16.5" height="16.5" viewBox="0 0 16.5 16.5"><circle cx="8.25" cy="8.25" r="7.5" fill="none" stroke="#6a6a6a" stroke-width="1.3"/><path d="M5.8 6.2 Q5.8 3.8 8.25 3.8 Q10.7 3.8 10.7 6 Q10.7 7.4 9.2 8.2 Q8.25 8.8 8.25 10" stroke="#6a6a6a" stroke-width="1.3" fill="none"/><circle cx="8.25" cy="12.3" r="0.9" fill="#6a6a6a"/></svg>
<svg style="left:1675px;top:108px;" width="17" height="14" viewBox="0 0 17 14"><rect x="0" y="0" width="17" height="14" rx="2.2" fill="#1a7cf5"/><rect x="2.6" y="2.6" width="5.8" height="5.6" fill="#fff"/><path d="M10 3.2 H14.6 M10 5.6 H14.6 M10 8 H14.6 M2.6 10.8 H14.6" stroke="#fff" stroke-width="1.2"/></svg>
<svg style="left:1713px;top:106.5px;" width="17" height="17" viewBox="0 0 17 17"><path d="M0.4 2.8 H16.6 M0.4 8.5 H16.6 M0.4 14.2 H16.6" stroke="#6a6a6a" stroke-width="1.3"/><circle cx="11.6" cy="2.8" r="2" fill="#f3eeee" stroke="#6a6a6a" stroke-width="1.2"/><circle cx="4.6" cy="8.5" r="2" fill="#f3eeee" stroke="#6a6a6a" stroke-width="1.2"/><circle cx="11.6" cy="14.2" r="2" fill="#f3eeee" stroke="#6a6a6a" stroke-width="1.2"/></svg>
<svg style="left:1751px;top:108px;" width="16" height="15" viewBox="0 0 16 15"><path d="M0.8 0.8 L15.2 14.2 H0.8 Z" stroke="#6a6a6a" stroke-width="1.3" fill="none" stroke-linejoin="round"/><path d="M3.6 7.2 L8.4 11.6 H3.6 Z" stroke="#6a6a6a" stroke-width="1.1" fill="none"/></svg>
<svg style="left:1789.5px;top:108px;" width="16.5" height="15" viewBox="0 0 16.5 15"><path d="M12.2 3 A6.6 6.6 0 1 0 12.2 12" stroke="#6a6a6a" stroke-width="1.3" fill="none"/><circle cx="7.4" cy="7.5" r="2.4" fill="#6a6a6a"/><path d="M9.6 7.5 H16.4" stroke="#6a6a6a" stroke-width="1.4"/></svg>
<div class="t" style="left:1528.00px;top:141.40px;font-size:15.6px;color:#7d7b7b;font-weight:bold;-webkit-text-stroke:0.05px currentColor;">Custom Class</div>
<div class="t" style="right:300.60px;top:177.59px;font-size:13.2px;color:#363636;letter-spacing:-0.302px;margin-right:0.302px;">Class</div>
<div class="p" style="left:1626.6px;top:171px;width:212.80000000000018px;height:20px;background:#fff;box-shadow:0 0.5px 0 0.5px rgba(0,0,0,0.06),0 1px 1px rgba(0,0,0,0.10);border-radius:4px"></div>
<div class="t" style="left:1630.90px;top:175.63px;font-size:14.0px;color:#303030;letter-spacing:0.293px;">ErrorLabel</div>
<svg style="left:1802px;top:175.4px;" width="12.8" height="12.8" viewBox="0 0 12.8 12.8"><circle cx="6.4" cy="6.4" r="6.4" fill="#7c7c7c"/><path d="M3.2 6.4 H9 M6.8 4 L9.2 6.4 L6.8 8.8" stroke="#fff" stroke-width="1.4" fill="none"/></svg>
<svg style="left:1822px;top:173.5px;" width="15" height="15.2" viewBox="0 0 15 15.2"><rect x="0" y="0" width="15" height="15.2" rx="3.2" fill="#1a7cf5"/><path d="M4.6 6.2 L7.5 9 L10.4 6.2" stroke="#fff" stroke-width="1.5" fill="none" stroke-linecap="round"/></svg>
<div class="t" style="right:300.60px;top:205.39px;font-size:13.2px;color:#363636;letter-spacing:0.141px;margin-right:-0.141px;">Module</div>
<div class="p" style="left:1623px;top:195.6px;width:220px;height:27.200000000000017px;background:#7ba8f2;border-radius:6.5px"></div>
<div class="p" style="left:1626.4px;top:199px;width:213.19999999999982px;height:20.400000000000006px;background:#fff;border-radius:3.5px"></div>
<div class="t" style="left:1630.90px;top:203.23px;font-size:14.0px;color:#303030;letter-spacing:-0.028px;">Guard</div>
<div class="p" style="left:1669.8px;top:200.5px;width:1.2000000000000455px;height:18.0px;background:#111"></div>
<svg style="left:1822px;top:201.6px;" width="15" height="15" viewBox="0 0 15 15"><rect x="0" y="0" width="15" height="15" rx="3.2" fill="#1a7cf5"/><path d="M4.6 6 L7.5 8.8 L10.4 6" stroke="#fff" stroke-width="1.5" fill="none" stroke-linecap="round"/></svg>
<div class="p" style="left:1571.5px;top:167px;width:275.5px;height:59.5px;border:2.6px solid #fd2b1c;box-sizing:border-box"></div>
<div class="p" style="left:1625.8px;top:228.9px;width:15.0px;height:15.0px;background:#fff;border-radius:3.4px;box-shadow:0 0 0 0.6px rgba(0,0,0,0.16),0 0.8px 1px rgba(0,0,0,0.10)"></div>
<div class="t" style="left:1646.30px;top:229.83px;font-size:14.87px;color:#303030;">Inherit Module From Target</div>
<div class="p" style="left:1529px;top:263px;width:309px;height:1px;background:#dcd8d8"></div>
<div class="t" style="left:1528.00px;top:273.28px;font-size:16.31px;color:#7d7b7b;font-weight:bold;-webkit-text-stroke:0.05px currentColor;">Identity</div>
<div class="t" style="right:300.60px;top:309.49px;font-size:13.2px;color:#363636;letter-spacing:0.095px;margin-right:-0.095px;">Restoration ID</div>
<div class="p" style="left:1626.6px;top:305px;width:211.80000000000018px;height:21px;background:#fff;box-shadow:0 0.5px 0 0.5px rgba(0,0,0,0.06),0 1px 1px rgba(0,0,0,0.10);"></div>
<div class="p" style="left:1529px;top:342px;width:309px;height:1px;background:#dcd8d8"></div>
<div class="t" style="left:1528.00px;top:352.11px;font-size:16.02px;color:#7d7b7b;font-weight:bold;-webkit-text-stroke:0.05px currentColor;">User Defined Runtime Attributes</div>
<div class="p" style="left:1529.4px;top:376.6px;width:309.0px;height:122.0px;background:#fff;border:1px solid #c9c6c6;box-sizing:border-box"></div>
<div class="p" style="left:1530.4px;top:412px;width:307.0px;height:1px;background:#e3e3e3"></div>
<div class="p" style="left:1697px;top:384px;width:1px;height:22px;background:#e3e3e3"></div>
<div class="p" style="left:1783.5px;top:384px;width:1.0px;height:22px;background:#e3e3e3"></div>
<div class="t" style="left:1540.50px;top:389.43px;font-size:14.0px;color:#303030;letter-spacing:0.027px;">Key Path</div>
<div class="t" style="left:1703.30px;top:389.43px;font-size:14.0px;color:#303030;letter-spacing:0.049px;">Type</div>
<div class="t" style="left:1788.90px;top:389.43px;font-size:14.0px;color:#303030;letter-spacing:-0.213px;">Val...</div>
<svg style="left:1536px;top:480px;" width="14" height="14" viewBox="0 0 14 14"><path d="M7 0.5 V13.5 M0.5 7 H13.5" stroke="#555" stroke-width="1.4"/></svg>
<svg style="left:1561.5px;top:486.5px;" width="13" height="2" viewBox="0 0 13 2"><path d="M0 1 H13" stroke="#b5b5b5" stroke-width="1.3"/></svg>
<div class="p" style="left:1529px;top:510px;width:309px;height:1px;background:#dcd8d8"></div>
<div class="t" style="left:1528.00px;top:520.11px;font-size:15.81px;color:#7d7b7b;font-weight:bold;-webkit-text-stroke:0.05px currentColor;">Document</div>
<div class="t" style="right:300.60px;top:555.49px;font-size:13.2px;color:#363636;letter-spacing:-0.074px;margin-right:0.074px;">Label</div>
<div class="p" style="left:1626.5px;top:551.5px;width:212.0999999999999px;height:19.899999999999977px;background:#fff;box-shadow:0 0.5px 0 0.5px rgba(0,0,0,0.06),0 1px 1px rgba(0,0,0,0.10);"></div>
<div class="t" style="left:1631.10px;top:555.13px;font-size:14.0px;color:#b9b6b6;letter-spacing:0.403px;">Xcode Specific Label</div>
<svg style="left:1629.5px;top:584px;" width="10" height="10" viewBox="0 0 10 10"><path d="M1 1 L9 9 M9 1 L1 9" stroke="#333" stroke-width="1.5"/></svg>
<div class="p" style="left:1649.0px;top:583.5px;width:11.0px;height:10.5px;background:linear-gradient(#f49587,#f49587);border-radius:2.2px;box-shadow:0 0.6px 1px rgba(0,0,0,0.2)"></div>
<div class="p" style="left:1671.8px;top:583.5px;width:11.0px;height:10.5px;background:linear-gradient(#f7bf74,#f7bf74);border-radius:2.2px;box-shadow:0 0.6px 1px rgba(0,0,0,0.2)"></div>
<div class="p" style="left:1694.6px;top:583.5px;width:11.0px;height:10.5px;background:linear-gradient(#f6da78,#f6da78);border-radius:2.2px;box-shadow:0 0.6px 1px rgba(0,0,0,0.2)"></div>
<div class="p" style="left:1717.4px;top:583.5px;width:11.0px;height:10.5px;background:linear-gradient(#cddf86,#cddf86);border-radius:2.2px;box-shadow:0 0.6px 1px rgba(0,0,0,0.2)"></div>
<div class="p" style="left:1740.2px;top:583.5px;width:11.0px;height:10.5px;background:linear-gradient(#89bbf4,#89bbf4);border-radius:2.2px;box-shadow:0 0.6px 1px rgba(0,0,0,0.2)"></div>
<div class="p" style="left:1763.0px;top:583.5px;width:11.0px;height:10.5px;background:linear-gradient(#d6a9ec,#d6a9ec);border-radius:2.2px;box-shadow:0 0.6px 1px rgba(0,0,0,0.2)"></div>
<div class="p" style="left:1785.8px;top:583.5px;width:11.0px;height:10.5px;background:linear-gradient(#cfcfcf,#cfcfcf);border-radius:2.2px;box-shadow:0 0.6px 1px rgba(0,0,0,0.2)"></div>
<div class="t" style="right:300.60px;top:608.99px;font-size:13.2px;color:#363636;letter-spacing:0.123px;margin-right:-0.123px;">Object ID</div>
<div class="t" style="left:1628.50px;top:608.63px;font-size:14.0px;color:#303030;letter-spacing:0.319px;">EUN-ue-X5F</div>
<div class="t" style="right:300.60px;top:634.49px;font-size:13.2px;color:#363636;letter-spacing:0.039px;margin-right:-0.039px;">Lock</div>
<div class="p" style="left:1626.5px;top:630px;width:213.0px;height:21px;background:#fff;border-radius:5px;box-shadow:0 0 0 0.5px rgba(0,0,0,0.10),0 1px 1.5px rgba(0,0,0,0.14)"></div>
<div class="t" style="left:1634.20px;top:634.13px;font-size:14.0px;color:#303030;letter-spacing:0.575px;">Inherited - (Nothing)</div>
<svg style="left:1822px;top:632px;" width="15.5" height="16" viewBox="0 0 15.5 16"><rect x="0" y="0" width="15.5" height="16" rx="3.4" fill="#1a7cf5"/><path d="M4.8 6.2 L7.75 3.6 L10.7 6.2 M4.8 9.8 L7.75 12.4 L10.7 9.8" stroke="#fff" stroke-width="1.3" fill="none" stroke-linecap="round"/></svg>
<div class="t" style="right:300.60px;top:662.99px;font-size:13.2px;color:#363636;letter-spacing:0.264px;margin-right:-0.264px;">Localizer Hint</div>
<div class="p" style="left:1626.5px;top:659px;width:212.0999999999999px;height:20.5px;background:#fff;box-shadow:0 0.5px 0 0.5px rgba(0,0,0,0.06),0 1px 1px rgba(0,0,0,0.10);"></div>
<div class="t" style="left:1631.10px;top:662.63px;font-size:14.0px;color:#b9b6b6;letter-spacing:0.336px;">Comment For Localizer</div>
<div class="p" style="left:1529px;top:696px;width:309px;height:1px;background:#dcd8d8"></div>
<div class="t" style="left:1528.00px;top:706.52px;font-size:15.77px;color:#7d7b7b;font-weight:bold;-webkit-text-stroke:0.05px currentColor;">Accessibility</div>
<div class="t" style="right:300.60px;top:737.49px;font-size:13.2px;color:#363636;letter-spacing:0.285px;margin-right:-0.285px;">Accessibility</div>
<svg style="left:1626.8px;top:736.1px;" width="15" height="15" viewBox="0 0 15 15"><rect x="0" y="0" width="15" height="15" rx="3.4" fill="#1a7cf5"/><path d="M3.6 7.8 L6.3 10.8 L11.4 3.8" stroke="#fff" stroke-width="1.9" fill="none" stroke-linecap="round" stroke-linejoin="round"/></svg>
<div class="t" style="left:1647.00px;top:737.23px;font-size:14.0px;color:#303030;letter-spacing:0.170px;">Enabled</div>
<div class="t" style="right:300.60px;top:764.79px;font-size:13.2px;color:#363636;letter-spacing:-0.074px;margin-right:0.074px;">Label</div>
<div class="p" style="left:1626.5px;top:760.4px;width:212.0999999999999px;height:20.800000000000068px;background:#fff;box-shadow:0 0.5px 0 0.5px rgba(0,0,0,0.06),0 1px 1px rgba(0,0,0,0.10);"></div>
<div class="t" style="left:1631.10px;top:764.43px;font-size:14.0px;color:#b9b6b6;letter-spacing:0.036px;">Label</div>
<div class="t" style="right:300.60px;top:793.99px;font-size:13.2px;color:#363636;letter-spacing:0.209px;margin-right:-0.209px;">Hint</div>
<div class="p" style="left:1626.5px;top:789.8px;width:212.0999999999999px;height:20.200000000000045px;background:#fff;box-shadow:0 0.5px 0 0.5px rgba(0,0,0,0.06),0 1px 1px rgba(0,0,0,0.10);"></div>
<div class="t" style="left:1631.10px;top:793.63px;font-size:14.0px;color:#b9b6b6;letter-spacing:0.268px;">Hint</div>
<div class="t" style="right:300.60px;top:822.99px;font-size:13.2px;color:#363636;letter-spacing:0.375px;margin-right:-0.375px;">Identifier</div>
<div class="p" style="left:1626.5px;top:819.2px;width:212.0999999999999px;height:19.799999999999955px;background:#fff;box-shadow:0 0.5px 0 0.5px rgba(0,0,0,0.06),0 1px 1px rgba(0,0,0,0.10);"></div>
<div class="t" style="left:1631.10px;top:822.63px;font-size:14.0px;color:#b9b6b6;letter-spacing:0.478px;">Identifier</div>
<div class="p" style="left:1529px;top:846px;width:309px;height:1px;background:#dcd8d8"></div>
<div class="t" style="right:300.60px;top:854.69px;font-size:13.2px;color:#363636;letter-spacing:-0.022px;margin-right:0.022px;">Traits</div>
<div class="p" style="left:1626.8px;top:853.2px;width:15.0px;height:15.0px;background:#fff;border-radius:3.4px;box-shadow:0 0 0 0.6px rgba(0,0,0,0.16),0 0.8px 1px rgba(0,0,0,0.10)"></div>
<div class="t" style="left:1647.00px;top:854.33px;font-size:14.0px;color:#303030;letter-spacing:0.585px;">Button</div>
<div class="p" style="left:1626.8px;top:876.07px;width:15.0px;height:15.0px;background:#fff;border-radius:3.4px;box-shadow:0 0 0 0.6px rgba(0,0,0,0.16),0 0.8px 1px rgba(0,0,0,0.10)"></div>
<div class="t" style="left:1647.00px;top:877.20px;font-size:14.0px;color:#303030;letter-spacing:0.222px;">Image</div>
<svg style="left:1626.8px;top:898.94px;" width="15" height="15" viewBox="0 0 15 15"><rect x="0" y="0" width="15" height="15" rx="3.4" fill="#1a7cf5"/><path d="M3.6 7.8 L6.3 10.8 L11.4 3.8" stroke="#fff" stroke-width="1.9" fill="none" stroke-linecap="round" stroke-linejoin="round"/></svg>
<div class="t" style="left:1647.00px;top:900.07px;font-size:14.0px;color:#303030;letter-spacing:0.512px;">Static Text</div>
<div class="p" style="left:1626.8px;top:921.8100000000001px;width:15.0px;height:15.0px;background:#fff;border-radius:3.4px;box-shadow:0 0 0 0.6px rgba(0,0,0,0.16),0 0.8px 1px rgba(0,0,0,0.10)"></div>
<div class="t" style="left:1647.00px;top:922.94px;font-size:14.0px;color:#303030;letter-spacing:0.246px;">Search Field</div>
<div class="p" style="left:1626.8px;top:944.6800000000001px;width:15.0px;height:15.0px;background:#fff;border-radius:3.4px;box-shadow:0 0 0 0.6px rgba(0,0,0,0.16),0 0.8px 1px rgba(0,0,0,0.10)"></div>
<div class="t" style="left:1647.00px;top:945.81px;font-size:14.0px;color:#303030;letter-spacing:0.139px;">Plays Sound</div>
<div class="p" style="left:1626.8px;top:967.5500000000001px;width:15.0px;height:15.0px;background:#fff;border-radius:3.4px;box-shadow:0 0 0 0.6px rgba(0,0,0,0.16),0 0.8px 1px rgba(0,0,0,0.10)"></div>
<div class="t" style="left:1647.00px;top:968.68px;font-size:14.0px;color:#303030;letter-spacing:0.187px;">Keyboard Key</div>
<div class="p" style="left:1626.8px;top:990.4200000000001px;width:15.0px;height:15.0px;background:#fff;border-radius:3.4px;box-shadow:0 0 0 0.6px rgba(0,0,0,0.16),0 0.8px 1px rgba(0,0,0,0.10)"></div>
<div class="t" style="left:1647.00px;top:991.55px;font-size:14.0px;color:#303030;letter-spacing:0.254px;">Summary Element</div>
<svg style="left:1626.8px;top:1013.2900000000001px;" width="15" height="15" viewBox="0 0 15 15"><rect x="0" y="0" width="15" height="15" rx="3.4" fill="#1a7cf5"/><path d="M3.6 7.8 L6.3 10.8 L11.4 3.8" stroke="#fff" stroke-width="1.9" fill="none" stroke-linecap="round" stroke-linejoin="round"/></svg>
<div class="t" style="left:1647.00px;top:1014.42px;font-size:14.0px;color:#303030;letter-spacing:0.379px;">User Interaction Enabled</div>
<div class="p" style="left:1626.8px;top:1036.16px;width:15.0px;height:15.0px;background:#fff;border-radius:3.4px;box-shadow:0 0 0 0.6px rgba(0,0,0,0.16),0 0.8px 1px rgba(0,0,0,0.10)"></div>
<div class="t" style="left:1647.00px;top:1037.29px;font-size:14.0px;color:#303030;letter-spacing:0.431px;">Updates Frequently</div>
<div class="p" style="left:1626.8px;top:1059.03px;width:15.0px;height:15.0px;background:#fff;border-radius:3.4px;box-shadow:0 0 0 0.6px rgba(0,0,0,0.16),0 0.8px 1px rgba(0,0,0,0.10)"></div>
<div class="t" style="left:1647.00px;top:1060.16px;font-size:14.0px;color:#303030;letter-spacing:0.364px;">Starts Media Session</div>
<div class="p" style="left:1626.8px;top:1081.9px;width:15.0px;height:15.0px;background:#fff;border-radius:3.4px;box-shadow:0 0 0 0.6px rgba(0,0,0,0.16),0 0.8px 1px rgba(0,0,0,0.10)"></div>
<div class="t" style="left:1647.00px;top:1083.03px;font-size:14.0px;color:#303030;letter-spacing:0.380px;">Adjustable</div>
<div class="p" style="left:1626.8px;top:1104.77px;width:15.0px;height:15.0px;background:#fff;border-radius:3.4px;box-shadow:0 0 0 0.6px rgba(0,0,0,0.16),0 0.8px 1px rgba(0,0,0,0.10)"></div>
<div class="t" style="left:1647.00px;top:1105.90px;font-size:14.0px;color:#303030;letter-spacing:0.451px;">Allows Direct Interaction</div>
<div class="p" style="left:1626.8px;top:1127.64px;width:15.0px;height:15.0px;background:#fff;border-radius:3.4px;box-shadow:0 0 0 0.6px rgba(0,0,0,0.16),0 0.8px 1px rgba(0,0,0,0.10)"></div>
<div class="t" style="left:1647.00px;top:1128.77px;font-size:14.0px;color:#303030;letter-spacing:0.166px;">Causes Page Turn</div>
<div class="p" style="left:1626.8px;top:1150.51px;width:15.0px;height:15.0px;background:#fff;border-radius:3.4px;box-shadow:0 0 0 0.6px rgba(0,0,0,0.16),0 0.8px 1px rgba(0,0,0,0.10)"></div>
<div class="t" style="left:1647.00px;top:1151.64px;font-size:14.0px;color:#303030;letter-spacing:0.237px;">Header</div>
<div class="p" style="left:1738.3px;top:853.2px;width:15.0px;height:15.0px;background:#fff;border-radius:3.4px;box-shadow:0 0 0 0.6px rgba(0,0,0,0.16),0 0.8px 1px rgba(0,0,0,0.10)"></div>
<div class="t" style="left:1759.10px;top:854.33px;font-size:14.0px;color:#303030;letter-spacing:0.406px;">Link</div>
<div class="p" style="left:1738.3px;top:876.2px;width:15.0px;height:15.0px;background:#fff;border-radius:3.4px;box-shadow:0 0 0 0.6px rgba(0,0,0,0.16),0 0.8px 1px rgba(0,0,0,0.10)"></div>
<div class="t" style="left:1759.10px;top:877.33px;font-size:14.0px;color:#303030;letter-spacing:0.374px;">Selected</div>
<div class="p" style="left:1529px;top:1182px;width:309px;height:1px;background:#dcd8d8"></div>
<svg style="left:772px;top:1127px;" width="17" height="17" viewBox="0 0 17 17"><rect x="0.7" y="0.7" width="15.6" height="15.6" rx="2.6" fill="none" stroke="#5f5f5f" stroke-width="1.3"/><rect x="3.4" y="3.4" width="2.8" height="10.2" fill="#5f5f5f"/></svg>
<svg style="left:801.5px;top:1127px;" width="17" height="17" viewBox="0 0 17 17"><circle cx="8.5" cy="8.5" r="7.8" fill="none" stroke="#5f5f5f" stroke-width="1.3"/><circle cx="8.5" cy="4.3" r="1.2" fill="#5f5f5f"/><path d="M4 6.4 H13 M8.5 6.4 V10 L6.6 14 M8.5 10 L10.4 14" stroke="#5f5f5f" stroke-width="1.2" fill="none"/></svg>
<svg style="left:834px;top:1127px;" width="18" height="17" viewBox="0 0 18 17"><circle cx="9" cy="8.5" r="7.8" fill="none" stroke="#5f5f5f" stroke-width="1.3"/><path d="M9 0.7 A7.8 7.8 0 0 0 9 16.3 Z" fill="#5f5f5f"/><path d="M9 4.3 A2.6 4.2 0 0 0 9 12.7 Z" fill="#fdfcfc"/><path d="M9 4.3 A2.6 4.2 0 0 1 9 12.7 Z" fill="#5f5f5f"/></svg>
<svg style="left:867px;top:1124.5px;" width="19" height="20" viewBox="0 0 19 20"><rect x="0.7" y="5.4" width="13.4" height="13.4" rx="1.8" fill="none" stroke="#5f5f5f" stroke-width="1.3"/><path d="M12.6 3.4 Q17.6 2.8 17.6 7.6" stroke="#5f5f5f" stroke-width="1.3" fill="none"/><path d="M14.6 0.8 L12 3.4 L14.6 5.8" stroke="#5f5f5f" stroke-width="1.3" fill="none"/></svg>
<svg style="left:902px;top:1127px;" width="17" height="17" viewBox="0 0 17 17"><rect x="0.7" y="0.7" width="15.6" height="15.6" rx="2" fill="none" stroke="#bdbdbd" stroke-width="1.3"/><path d="M8.5 0.7 V16.3" stroke="#bdbdbd" stroke-width="1.3"/></svg>
<svg style="left:937.5px;top:1126.5px;" width="12.5" height="18.5" viewBox="0 0 12.5 18.5"><rect x="0.7" y="0.7" width="11.1" height="17.1" rx="2.2" fill="none" stroke="#5f5f5f" stroke-width="1.3"/><path d="M4.4 2.6 H8.1" stroke="#5f5f5f" stroke-width="1"/></svg>
<div class="t" style="left:968.50px;top:1129.43px;font-size:13.77px;color:#555555;">iPhone 11</div>
<svg style="left:1086.5px;top:1126px;" width="19" height="19" viewBox="0 0 19 19"><circle cx="7.6" cy="7.6" r="6.8" fill="none" stroke="#5f5f5f" stroke-width="1.4"/><path d="M4.4 7.6 H10.8" stroke="#5f5f5f" stroke-width="1.4"/><path d="M12.4 12.4 L17.6 17.6" stroke="#5f5f5f" stroke-width="1.8" stroke-linecap="round"/></svg>
<div class="t" style="left:1124.60px;top:1129.18px;font-size:14.34px;color:#555555;">76%</div>
<svg style="left:1171.5px;top:1126px;" width="19" height="19" viewBox="0 0 19 19"><circle cx="7.6" cy="7.6" r="6.8" fill="none" stroke="#5f5f5f" stroke-width="1.4"/><path d="M4.4 7.6 H10.8 M7.6 4.4 V10.8" stroke="#5f5f5f" stroke-width="1.4"/><path d="M12.4 12.4 L17.6 17.6" stroke="#5f5f5f" stroke-width="1.8" stroke-linecap="round"/></svg>
<svg style="left:1349.5px;top:1126px;" width="20" height="19" viewBox="0 0 20 19"><path d="M0.7 4.6 V0.7 H4.6 M15.4 0.7 H19.3 V4.6 M19.3 14.4 V18.3 H15.4 M4.6 18.3 H0.7 V14.4" stroke="#5f5f5f" stroke-width="1.3" fill="none"/><path d="M4.9 10.4 A5.5 5.5 0 1 1 9.4 14" stroke="#5f5f5f" stroke-width="1.3" fill="none"/><path d="M11.6 11.8 L9.2 14 L11.6 16.2" stroke="#5f5f5f" stroke-width="1.3" fill="none"/></svg>
<svg style="left:1382.5px;top:1126px;" width="19" height="19" viewBox="0 0 19 19"><path d="M0.7 0 V19" stroke="#5f5f5f" stroke-width="1.4"/><rect x="3.6" y="2.4" width="11" height="5.6" fill="none" stroke="#5f5f5f" stroke-width="1.3"/><rect x="3.6" y="11" width="15" height="5.6" fill="none" stroke="#5f5f5f" stroke-width="1.3"/></svg>
<svg style="left:1415.5px;top:1126px;" width="20" height="19" viewBox="0 0 20 19"><rect x="6.2" y="5.6" width="7.6" height="7.8" fill="none" stroke="#5f5f5f" stroke-width="1.3"/><path d="M10 0.6 V5.6 M10 13.4 V18.4 M0.4 9.5 H6.2 M13.8 9.5 H19.6 M8 0.6 H12 M8 18.4 H12 M0.6 7.6 V11.4 M19.4 7.6 V11.4" stroke="#5f5f5f" stroke-width="1.2" fill="none"/></svg>
<svg style="left:1448px;top:1126px;" width="20" height="19" viewBox="0 0 20 19"><path d="M10 5.2 L15.4 14.2 H4.6 Z" fill="none" stroke="#5f5f5f" stroke-width="1.3"/><circle cx="10" cy="11" r="1.2" fill="#5f5f5f"/><path d="M0.6 9.5 H3.6 M16.4 9.5 H19.4 M0.6 7.6 V11.4 M19.4 7.6 V11.4 M1.6 8.2 L3.6 9.5 L1.6 10.8" stroke="#5f5f5f" stroke-width="1.2" fill="none"/></svg>
<svg style="left:1483.5px;top:1126px;" width="20" height="19" viewBox="0 0 20 19"><path d="M7 2.4 H1 V18.3 H19 V2.4 H13" stroke="#5f5f5f" stroke-width="1.3" fill="none"/><path d="M10 1 V11 M6.6 7.8 L10 11.2 L13.4 7.8" stroke="#5f5f5f" stroke-width="1.3" fill="none"/></svg>
<svg style="left:431.5px;top:1167px;" width="20" height="12" viewBox="0 0 20 12"><path d="M2.6 0.5 H15 Q16 0.5 16.6 1.3 L19.4 5.3 Q19.8 6 19.4 6.7 L16.6 10.7 Q16 11.5 15 11.5 H2.6 Q0.5 11.5 0.5 9.4 V2.6 Q0.5 0.5 2.6 0.5 Z" fill="#0c6cfb"/></svg>
<div class="p" style="left:462px;top:1164px;width:1px;height:18px;background:#dedede"></div>
<svg style="left:475px;top:1164.5px;" width="13" height="17" viewBox="0 0 13 17"><rect x="0.9" y="0.9" width="3" height="15.2" rx="1.2" fill="none" stroke="#5f5f5f" stroke-width="1.3"/><rect x="8.7" y="0.9" width="3" height="15.2" rx="1.2" fill="none" stroke="#5f5f5f" stroke-width="1.3"/></svg>
<svg style="left:510.5px;top:1164px;" width="18.5" height="18" viewBox="0 0 18.5 18"><path d="M0.8 9.6 L8.8 2.4 L16.6 9.2" stroke="#bdbdbd" stroke-width="1.3" fill="none"/><path d="M16.8 5.6 V9.4 H13" stroke="#bdbdbd" stroke-width="1.3" fill="none"/><rect x="3.6" y="12.6" width="10.2" height="2.6" fill="none" stroke="#bdbdbd" stroke-width="1.2"/></svg>
<svg style="left:550.5px;top:1164px;" width="14" height="18" viewBox="0 0 14 18"><path d="M7 0.8 V10 M3.4 6.6 L7 10.2 L10.6 6.6" stroke="#bdbdbd" stroke-width="1.4" fill="none"/><rect x="1.4" y="13.4" width="11.2" height="3.6" fill="none" stroke="#bdbdbd" stroke-width="1.3"/></svg>
<svg style="left:588.5px;top:1164px;" width="14" height="18" viewBox="0 0 14 18"><path d="M7 10.6 V1 M3.4 4.4 L7 0.8 L10.6 4.4" stroke="#bdbdbd" stroke-width="1.4" fill="none"/><rect x="1.4" y="13.4" width="11.2" height="3.6" fill="none" stroke="#bdbdbd" stroke-width="1.3"/></svg>
<div class="p" style="left:615px;top:1164px;width:1px;height:18px;background:#dedede"></div>
<svg style="left:627px;top:1164px;" width="16" height="18" viewBox="0 0 16 18"><path d="M4 3.6 L12.4 1 L15.2 3 V13.8 L6.6 17 L4 15 Z M4 3.6 L6.8 5.6 V17 M6.8 5.6 L15.2 3" stroke="#5f5f5f" stroke-width="1.2" fill="none"/><path d="M1.2 5.4 V14.6 L3.6 16.4 M2.4 4.6 V15.4" stroke="#5f5f5f" stroke-width="1" fill="none"/></svg>
<svg style="left:664px;top:1164px;" width="18" height="18" viewBox="0 0 18 18"><circle cx="3.4" cy="3.6" r="2.6" fill="none" stroke="#5f5f5f" stroke-width="1.3"/><circle cx="14.6" cy="9" r="2.6" fill="none" stroke="#5f5f5f" stroke-width="1.3"/><circle cx="3.4" cy="14.4" r="2.6" fill="none" stroke="#5f5f5f" stroke-width="1.3"/><path d="M5.6 5 L12 8 M5.6 13 L12 10" stroke="#5f5f5f" stroke-width="1.3"/></svg>
<svg style="left:702.5px;top:1164px;" width="16" height="18" viewBox="0 0 16 18"><rect x="0.7" y="0.7" width="14.6" height="7" rx="3.5" fill="none" stroke="#5f5f5f" stroke-width="1.3"/><circle cx="4.4" cy="4.2" r="1.6" fill="#5f5f5f"/><rect x="0.7" y="10.3" width="14.6" height="7" rx="3.5" fill="none" stroke="#5f5f5f" stroke-width="1.3"/><circle cx="11.6" cy="13.8" r="1.6" fill="#5f5f5f"/></svg>
<svg style="left:741px;top:1164px;" width="17" height="18" viewBox="0 0 17 18"><path d="M0.8 8 L16.2 1 L10 17 L8.8 9.4 Z" stroke="#5f5f5f" stroke-width="1.3" fill="none" stroke-linejoin="round"/></svg>
<div class="p" style="left:769px;top:1164px;width:1px;height:18px;background:#dedede"></div>
<svg style="left:778px;top:1162px;" width="20.5" height="20.5" viewBox="0 0 20.5 20.5"><rect x="0.5" y="0.5" width="19.5" height="19.5" rx="5" fill="#f3f3f3" stroke="#cfcfcf"/><path d="M10.25 0.5 V20 M0.5 10.25 H20 M5.4 0.5 V20 M15.1 0.5 V20 M0.5 5.4 H20 M0.5 15.1 H20 M2 2 L18.5 18.5 M18.5 2 L2 18.5" stroke="#cfcfcf" stroke-width="0.6"/><circle cx="10.25" cy="10.25" r="5" fill="none" stroke="#cfcfcf" stroke-width="0.6"/></svg>
<div class="t" style="left:803.80px;top:1166.20px;font-size:14.28px;color:#2d2d2d;">GuardDemo</div>
<svg style="left:1484.5px;top:1165px;" width="17" height="16" viewBox="0 0 17 16"><rect x="0.7" y="0.7" width="15.6" height="14.6" rx="2.6" fill="none" stroke="#5f5f5f" stroke-width="1.3"/><rect x="3.2" y="9.4" width="10.6" height="3.4" fill="#5f5f5f"/></svg>
</div></body></html>
